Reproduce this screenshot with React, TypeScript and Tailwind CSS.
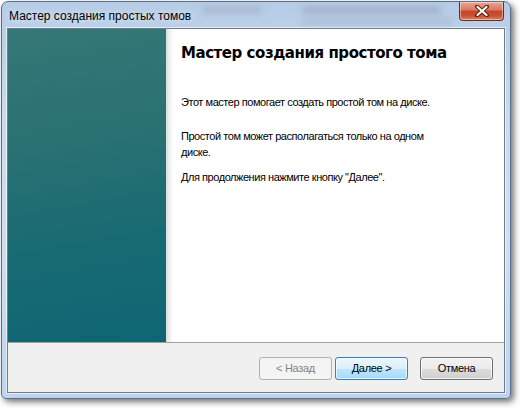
import React from "react";

function CloseButton() {
  return (
    <div className="absolute right-[6px] top-0 flex h-[19px] w-[45px] items-center justify-center rounded-b-[4px] border border-t-0 border-[#6d2a22] bg-[linear-gradient(to_bottom,#e8a593_0%,#d9785f_45%,#c7452a_50%,#c94f33_75%,#e0845c_100%)] shadow-[inset_0_0_0_1px_rgba(255,255,255,0.45)]">
      <svg width="14" height="12" viewBox="0 0 14 12">
        <path
          d="M2 1.5 L12 10.5 M12 1.5 L2 10.5"
          stroke="#5a1e14"
          strokeWidth="4"
          strokeLinecap="round"
        />
        <path
          d="M2.5 2 L11.5 10 M11.5 2 L2.5 10"
          stroke="#ffffff"
          strokeWidth="2.2"
          strokeLinecap="round"
        />
      </svg>
    </div>
  );
}

export default function App() {
  return (
    <div className="h-[408px] w-[520px] bg-white pl-px pt-px">
      <div className="relative flex h-[398px] w-[510px] flex-col rounded-t-[7px] rounded-b-[5px] border border-[#5b6f86] bg-[linear-gradient(to_bottom,#b6cce6_0%,#c8dbf1_30%,#cfe0f3_60%,#bcd4ef_100%)] shadow-[3px_3px_6px_rgba(0,0,0,0.55)]">
        {/* blurred background content behind glass */}
        <div className="pointer-events-none absolute left-[200px] top-[4px] h-[8px] w-[60px] rounded-full bg-[#9aa8b8] opacity-50 blur-[3px]" />
        <div className="pointer-events-none absolute left-[300px] top-[4px] h-[8px] w-[140px] rounded-full bg-[#8d9bad] opacity-50 blur-[3px]" />
        <div className="pointer-events-none absolute left-[300px] top-[16px] h-[7px] w-[150px] rounded-full bg-[#9ba9ba] opacity-40 blur-[3px]" />
        <CloseButton />
        <div className="flex h-[26px] shrink-0 items-center pl-[7px] pt-[1px] font-['Liberation_Sans',Arial,sans-serif] text-[12px] text-black [text-shadow:0_0_6px_rgba(255,255,255,0.9)]">
          Мастер создания простых томов
        </div>
        <div className="mx-[5px] mb-[5px] flex flex-1 flex-col border border-[#6f7c8b] bg-[#f0f0f0] shadow-[0_0_0_1px_rgba(255,255,255,0.6)]">
          <div className="flex h-[314px] border-b border-[#a0a0a0] bg-white">
            <div className="h-full w-[158px] bg-[#1d6b72] bg-[linear-gradient(170deg,#367878_0%,#2a7172_35%,#176a72_70%,#0e6674_100%)]" />
            <div className="flex flex-1 bg-[linear-gradient(to_right,#d8dcdc_0px,#f3f4f4_4px,#ffffff_8px)] pl-[15px] pr-3 font-['Liberation_Sans',Arial,sans-serif] text-[11px] tracking-[-0.45px] text-black">
              <div className="flex flex-col">
                <div className="mt-[14px] font-['DejaVu_Sans',Verdana,sans-serif] text-[15px] font-bold leading-[20px] tracking-[-0.45px]">
                  Мастер создания простого тома
                </div>
                <div className="mt-[33px] leading-[13px]">
                  Этот мастер помогает создать простой том на диске.
                </div>
                <div className="mt-[19px] w-[260px] leading-[16px]">
                  Простой том может располагаться только на одном диске.
                </div>
                <div className="mt-[11px] leading-[13px]">
                  Для продолжения нажмите кнопку "Далее".
                </div>
              </div>
            </div>
          </div>
          <div className="flex flex-1 items-start justify-end pr-[11px] pt-[14px] font-['Liberation_Sans',Arial,sans-serif] text-[11px] tracking-[-0.3px]">
            <div className="flex h-[23px] w-[73px] items-center justify-center rounded-[3px] border border-[#adb2b5] bg-[#f4f4f4] text-[#838383]">
              &lt; Назад
            </div>
            <div className="ml-[3px] flex h-[23px] w-[73px] items-center justify-center rounded-[3px] border border-[#3c7fb1] bg-[linear-gradient(to_bottom,#eaf6fd_0%,#d9f0fc_50%,#bee6fd_51%,#a7d9f5_100%)] text-black shadow-[inset_0_0_0_1px_rgba(255,255,255,0.7)]">
              Далее &gt;
            </div>
            <div className="ml-[12px] flex h-[23px] w-[73px] items-center justify-center rounded-[3px] border border-[#707070] bg-[linear-gradient(to_bottom,#f2f2f2_0%,#ebebeb_50%,#dddddd_51%,#cfcfcf_100%)] text-black shadow-[inset_0_0_0_1px_rgba(255,255,255,0.7)]">
              Отмена
            </div>
          </div>
        </div>
      </div>
    </div>
  );
}
